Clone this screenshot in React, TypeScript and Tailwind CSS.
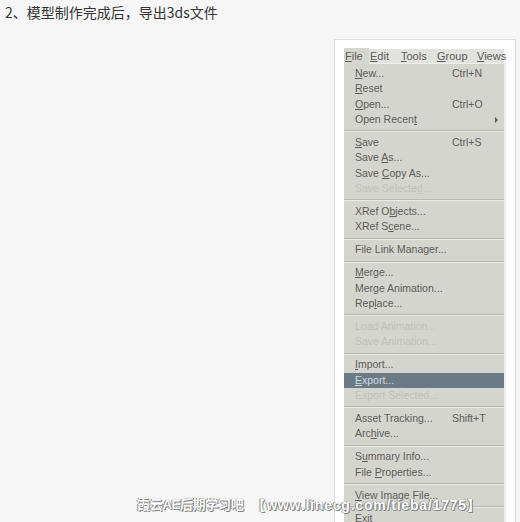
const menuBar = [
  { k: "F", rest: "ile", w: "w-[25px]" },
  { k: "E", rest: "dit", w: "w-[31px]" },
  { k: "T", rest: "ools", w: "w-[36px]" },
  { k: "G", rest: "roup", w: "w-[40px]" },
  { k: "V", rest: "iews", w: "w-[28px]" },
];

type Item = {
  label: [string, string, string];
  shortcut?: string;
  sub?: boolean;
  disabled?: boolean;
  active?: boolean;
};

// label split as [before, underlined, after]
const groups: Item[][] = [
  [
    { label: ["", "N", "ew..."], shortcut: "Ctrl+N" },
    { label: ["", "R", "eset"] },
    { label: ["", "O", "pen..."], shortcut: "Ctrl+O" },
    { label: ["Open Recen", "t", ""], sub: true },
  ],
  [
    { label: ["", "S", "ave"], shortcut: "Ctrl+S" },
    { label: ["Save ", "A", "s..."] },
    { label: ["Save ", "C", "opy As..."] },
    { label: ["Save Selecte", "d", "..."], disabled: true },
  ],
  [
    { label: ["XRef O", "b", "jects..."] },
    { label: ["XRef S", "c", "ene..."] },
  ],
  [{ label: ["File Link Manager...", "", ""] }],
  [
    { label: ["", "M", "erge..."] },
    { label: ["Merge Animation...", "", ""] },
    { label: ["Rep", "l", "ace..."] },
  ],
  [
    { label: ["Load Animation...", "", ""], disabled: true },
    { label: ["Save Animation...", "", ""], disabled: true },
  ],
  [
    { label: ["", "I", "mport..."] },
    { label: ["", "E", "xport..."], active: true },
    { label: ["Export Selected...", "", ""], disabled: true },
  ],
  [
    { label: ["Asset Tracking...", "", ""], shortcut: "Shift+T" },
    { label: ["Arc", "h", "ive..."] },
  ],
  [
    { label: ["S", "u", "mmary Info..."] },
    { label: ["File ", "P", "roperties..."] },
  ],
  [{ label: ["", "V", "iew Image File..."] }],
  [{ label: ["E", "x", "it"] }],
];

function MenuRow({ item }: { item: Item }) {
  const color = item.active
    ? "bg-[#6a7a86] text-[#d3dade]"
    : item.disabled
      ? "text-[#c0c0ba]"
      : "text-[#5c5c5a]";
  return (
    <div className={`grid h-[15.33px] grid-cols-[1fr_52px] items-center pl-[11px] ${color}`}>
      <span className="whitespace-nowrap">
        {item.label[0]}
        {item.label[1] && <u className="underline-offset-1">{item.label[1]}</u>}
        {item.label[2]}
      </span>
      <span className="flex items-center justify-between whitespace-nowrap pr-[6px]">
        {item.shortcut}
        {item.sub && (
          <span className="ml-auto h-0 w-0 border-y-[3px] border-l-[3px] border-y-transparent border-l-[#5a5a58]" />
        )}
      </span>
    </div>
  );
}

export default function App() {
  return (
    <div className="relative h-[522px] w-[520px] overflow-hidden bg-[#f6f6f6]">
      <p className="pl-[5px] pt-[2px] text-[14px] leading-[20px] text-[#333] [font-family:'Noto_Sans_CJK_SC','Liberation_Sans',sans-serif]">
        2、模型制作完成后，导出3ds文件
      </p>

      {/* screenshot frame */}
      <div className="ml-[334px] mt-[17px] h-[500px] w-[182px] border border-[#dedede] bg-white pl-[9px] pt-[9px] text-[10.5px] [font-family:'Liberation_Sans',sans-serif]">
        <div className="w-[160px]">
          <div className="flex h-[14px] items-center bg-[#e2e2de] text-[11px] text-[#5c5c5a]">
            {menuBar.map((m, i) => (
              <span
                key={m.k}
                className={`${m.w} pl-[1px] ${i === 0 ? "bg-[#d6d6d1]" : ""}`}
              >
                <u className="underline-offset-1">{m.k}</u>
                {m.rest}
              </span>
            ))}
          </div>
          <div className="border-t border-[#eeeeea] bg-[#d5d5cf] pt-[2px] shadow-[2px_0_0_#ececea]">
            {groups.map((g, gi) => (
              <div key={gi}>
                {gi > 0 && (
                  <div className="flex h-[7.7px] flex-col justify-center">
                    <div className="h-px bg-[#b9b9b3]" />
                    <div className="h-px bg-[#eaeae6]" />
                  </div>
                )}
                {g.map((it, ii) => (
                  <MenuRow key={ii} item={it} />
                ))}
              </div>
            ))}
          </div>
        </div>
      </div>

      {/* watermark */}
      <div className="absolute left-[137px] top-[495px] flex gap-[8px] font-bold text-white [font-family:'Liberation_Sans','Noto_Sans_CJK_SC',sans-serif] [text-shadow:0_0_1px_#666,1px_1px_0_#888,-1px_0_0_#999]">
        <span className="text-[13px] tracking-[-0.3px]">霞云AE后期学习吧</span>
        <span className="text-[14px] tracking-[0.8px]">【www.linecg.com/tieba/1775】</span>
      </div>
    </div>
  );
}
